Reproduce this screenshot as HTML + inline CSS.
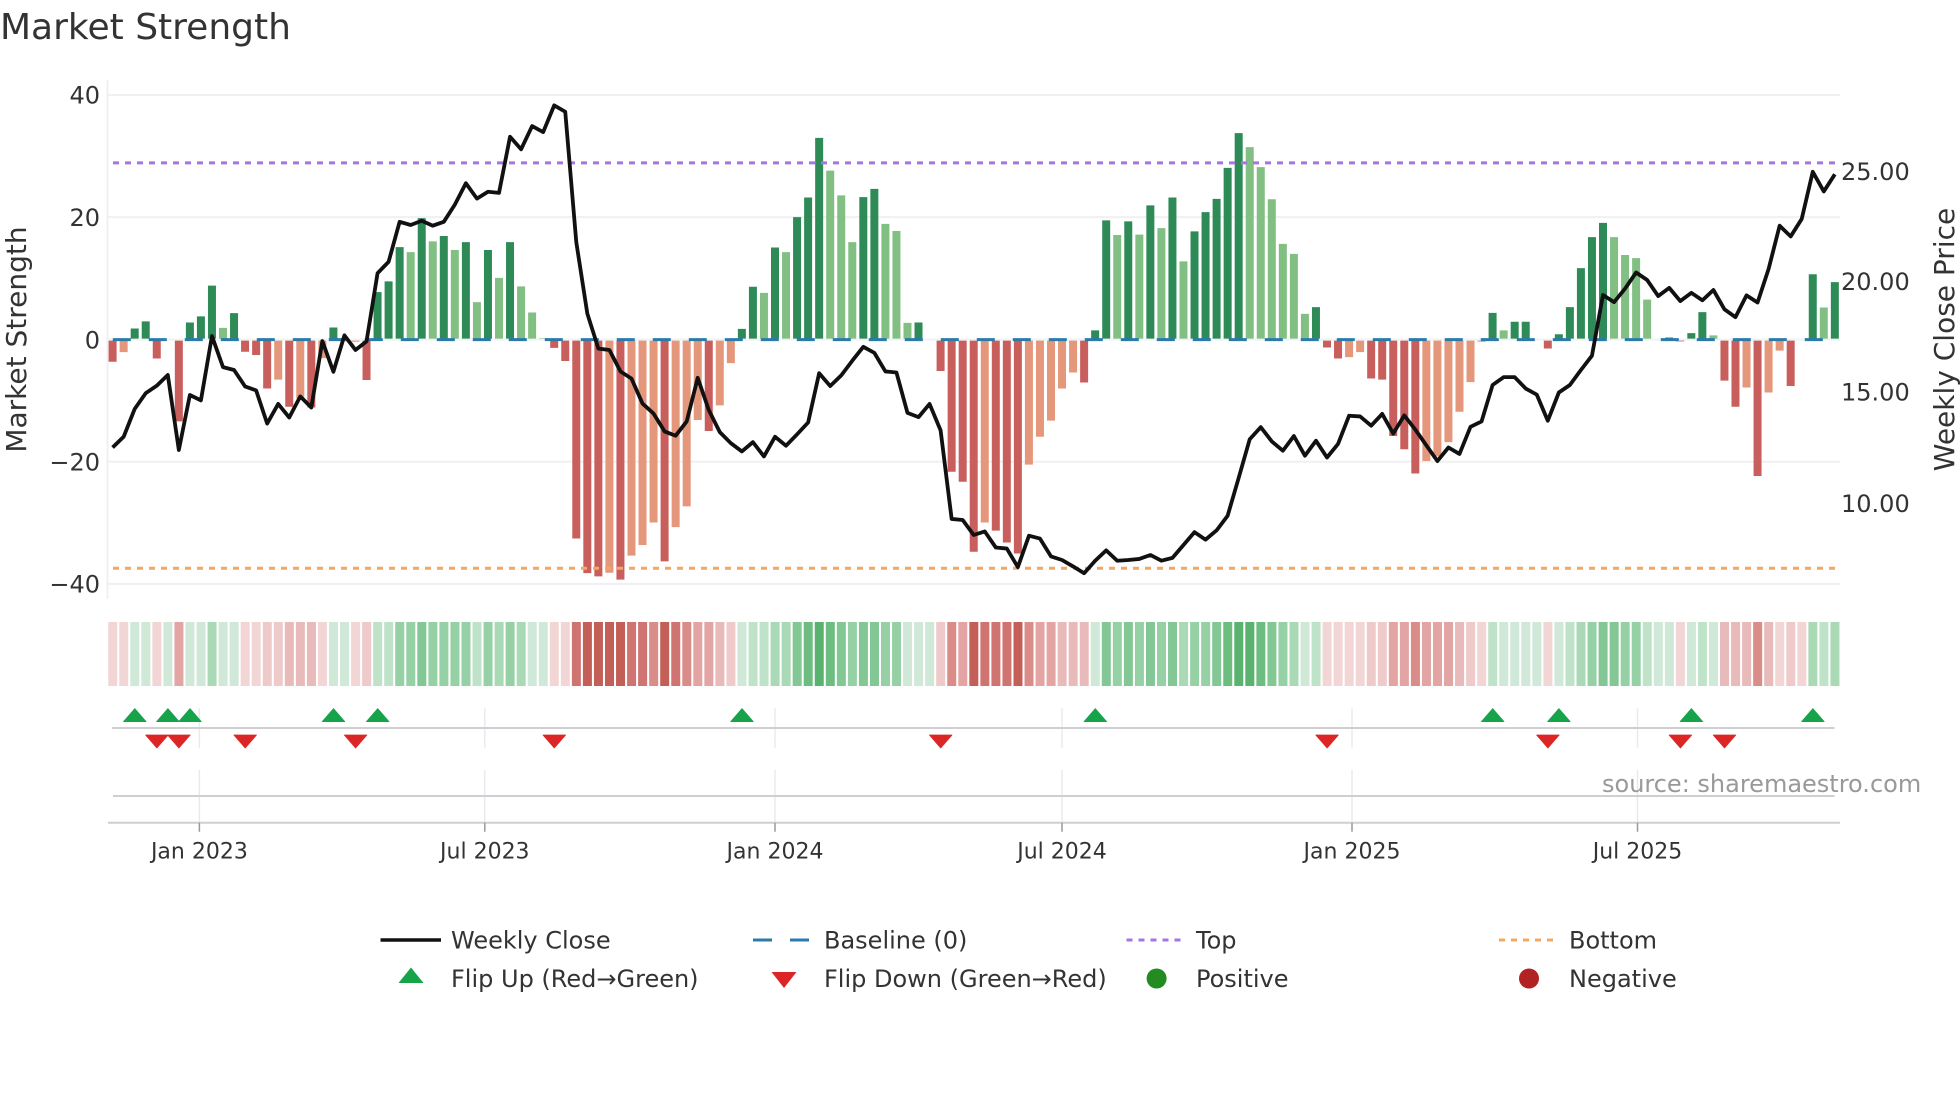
<!DOCTYPE html>
<html lang="en">
<head>
<meta charset="utf-8">
<title>Market Strength</title>
<style>
html,body{margin:0;padding:0;background:#fff}
svg{display:block}
text{font-family:"DejaVu Sans","Liberation Sans",sans-serif;fill:#333}
.n{vector-effect:non-scaling-stroke;fill:none}
</style>
</head>
<body>
<svg xmlns="http://www.w3.org/2000/svg" width="1960" height="1102" viewBox="0 0 1960 1102">
<rect width="1960" height="1102" fill="#fff"/>
<defs>
<polygon id="u" points="-11.3,0 11.3,0 0,-13" fill="#16a34a" stroke="#16a34a" stroke-width=".8" stroke-linejoin="round"/>
<polygon id="d" points="-11.3,0 11.3,0 0,13" fill="#dc2626" stroke="#dc2626" stroke-width=".8" stroke-linejoin="round"/>
</defs>

<text x="0" y="39" font-size="36">Market Strength</text>

<!-- grid -->
<g stroke="#f0f0f2" stroke-width="2">
<line x1="107" y1="95" x2="1840" y2="95"/>
<line x1="107" y1="217.1" x2="1840" y2="217.1"/>
<line x1="107" y1="461.8" x2="1840" y2="461.8"/>
<line x1="107" y1="583.9" x2="1840" y2="583.9"/>
<line x1="107.5" y1="80" x2="107.5" y2="599"/>
</g>

<!-- bars -->
<g transform="translate(112.6,339.6) scale(11.04,.35714)">
<path class="n" stroke="#2e8b57" stroke-width="8" d="M2 0V-31M3 0V-51M7 0V-48M8 0V-65M9 0V-151M11 0V-74M20 0V-34M24 0V-133M25 0V-163M26 0V-259M28 0V-340M30 0V-290M32 0V-273M34 0V-251M36 0V-273M57 0V-30M58 0V-148M60 0V-258M62 0V-343M63 0V-398M64 0V-565M68 0V-399M69 0V-422M73 0V-48M89 0V-26M90 0V-334M92 0V-331M94 0V-376M96 0V-398M98 0V-303M99 0V-357M100 0V-394M101 0V-481M102 0V-578M109 0V-91M125 0V-75M127 0V-50M128 0V-50M131 0V-15M132 0V-91M133 0V-200M134 0V-287M135 0V-327M141 0V-6M143 0V-18M144 0V-77M154 0V-183M156 0V-161"/>
<path class="n" stroke="#82bf82" stroke-width="8" d="M10 0V-33M27 0V-245M29 0V-275M31 0V-251M33 0V-105M35 0V-173M37 0V-149M38 0V-76M39 0V-4M59 0V-131M61 0V-245M65 0V-473M66 0V-404M67 0V-273M70 0V-324M71 0V-304M72 0V-47M91 0V-293M93 0V-294M95 0V-312M97 0V-219M103 0V-539M104 0V-483M105 0V-393M106 0V-268M107 0V-240M108 0V-72M126 0V-26M136 0V-287M137 0V-237M138 0V-228M139 0V-112M145 0V-12M155 0V-90"/>
<path class="n" stroke="#c95f5c" stroke-width="8" d="M0 0V62M4 0V53M6 0V229M12 0V34M13 0V43M14 0V137M16 0V188M18 0V190M23 0V113M40 0V23M41 0V60M42 0V557M43 0V654M44 0V663M46 0V672M50 0V621M54 0V256M75 0V88M76 0V370M77 0V398M78 0V594M80 0V535M81 0V568M82 0V599M88 0V120M110 0V22M111 0V53M114 0V109M115 0V112M116 0V270M117 0V307M118 0V375M130 0V25M142 0V5M146 0V115M147 0V188M149 0V382M152 0V130"/>
<path class="n" stroke="#e5977c" stroke-width="8" d="M1 0V35M15 0V112M17 0V165M19 0V52M22 0V6M45 0V653M47 0V605M48 0V575M49 0V512M51 0V525M52 0V467M53 0V225M55 0V184M56 0V66M79 0V512M83 0V350M84 0V272M85 0V227M86 0V137M87 0V92M112 0V49M113 0V35M119 0V340M120 0V327M121 0V287M122 0V202M123 0V119M124 0V6M148 0V134M150 0V148M151 0V31"/>
</g>

<!-- zero line & baseline -->
<line x1="107" y1="339.6" x2="1840" y2="339.6" stroke="#eef3f3" stroke-width="2"/>
<line x1="112.8" y1="339.6" x2="1835" y2="339.6" stroke="#2b7baa" stroke-width="3" stroke-dasharray="18 18"/>

<!-- top / bottom -->
<line x1="113" y1="162.9" x2="1835" y2="162.9" stroke="#a875e0" stroke-width="3" stroke-dasharray="6 6"/>
<line x1="113" y1="568.2" x2="1835" y2="568.2" stroke="#f4a765" stroke-width="3" stroke-dasharray="6 6"/>

<!-- price line -->
<g transform="translate(112.6,60) scale(11.04,.35714)">
<polyline class="n" stroke="#111" stroke-width="3.8" stroke-linejoin="round" points="0,1085 1,1055 2,977 3,933 4,912 5,882 6,1092 7,938 8,953 9,773 10,860 11,868 12,914 13,925 14,1018 15,963 16,1001 17,942 18,973 19,787 20,873 21,771 22,812 23,788 24,597 25,565 26,453 27,462 28,450 29,464 30,453 31,405 32,345 33,388 34,369 35,372 36,215 37,250 38,185 39,202 40,127 41,145 42,510 43,710 44,808 45,812 46,872 47,892 48,962 49,990 50,1040 51,1052 52,1012 53,890 54,980 55,1042 56,1073 57,1096 58,1070 59,1110 60,1055 61,1080 62,1048 63,1015 64,877 65,913 66,883 67,842 68,803 69,820 70,872 71,875 72,988 73,1000 74,963 75,1037 76,1285 77,1288 78,1330 79,1320 80,1365 81,1368 82,1420 83,1332 84,1340 85,1390 86,1400 87,1418 88,1437 89,1402 90,1373 91,1402 92,1400 93,1397 94,1386 95,1402 96,1394 97,1358 98,1322 99,1343 100,1317 101,1276 102,1170 103,1062 104,1028 105,1068 106,1094 107,1053 108,1108 109,1066 110,1113 111,1075 112,996 113,998 114,1024 115,991 116,1046 117,995 118,1035 119,1079 120,1123 121,1085 122,1103 123,1027 124,1012 125,910 126,888 127,888 128,920 129,937 130,1010 131,931 132,910 133,868 134,828 135,658 136,678 137,640 138,595 139,616 140,661 141,638 142,675 143,652 144,673 145,644 146,698 147,720 148,659 149,679 150,585 151,464 152,494 153,445 154,313 155,368 156,320"/>
</g>

<!-- y labels left -->
<g font-size="24" text-anchor="end">
<text x="100" y="103.7">40</text>
<text x="100" y="225.8">20</text>
<text x="100" y="348.3">0</text>
<text x="100" y="470.5">−20</text>
<text x="100" y="592.6">−40</text>
</g>
<!-- y labels right -->
<g font-size="24">
<text x="1841" y="180.1">25.00</text>
<text x="1841" y="290.1">20.00</text>
<text x="1841" y="400.7">15.00</text>
<text x="1841" y="512">10.00</text>
</g>
<text transform="translate(26,339.5) rotate(-90)" font-size="28" text-anchor="middle">Market Strength</text>
<text transform="translate(1954,339.5) rotate(-90)" font-size="28" text-anchor="middle">Weekly Close Price</text>

<!-- heat strip -->
<g transform="translate(112.7,622) scale(11.04,64)">
<path class="n" stroke-width="9" stroke="#f2d6d6" d="M0 0V1M1 0V1M4 0V1M12 0V1M13 0V1M19 0V1M22 0V1M40 0V1M41 0V1M110 0V1M111 0V1M112 0V1M113 0V1M124 0V1M130 0V1M142 0V1M151 0V1M153 0V1"/>
<path class="n" stroke-width="9" stroke="#eecaca" d="M14 0V1M15 0V1M23 0V1M56 0V1M75 0V1M114 0V1M115 0V1M123 0V1M152 0V1"/>
<path class="n" stroke-width="9" stroke="#e8baba" d="M16 0V1M17 0V1M18 0V1M55 0V1M86 0V1M87 0V1M88 0V1M122 0V1M146 0V1M147 0V1M148 0V1M150 0V1"/>
<path class="n" stroke-width="9" stroke="#e2a5a3" d="M6 0V1M53 0V1M54 0V1M77 0V1M84 0V1M85 0V1M116 0V1M117 0V1M119 0V1M120 0V1M121 0V1"/>
<path class="n" stroke-width="9" stroke="#d98c88" d="M49 0V1M52 0V1M76 0V1M83 0V1M118 0V1M149 0V1"/>
<path class="n" stroke-width="9" stroke="#cf7470" d="M42 0V1M47 0V1M48 0V1M51 0V1M79 0V1M80 0V1M81 0V1"/>
<path class="n" stroke-width="9" stroke="#c45f58" d="M43 0V1M44 0V1M45 0V1M46 0V1M50 0V1M78 0V1M82 0V1"/>
<path class="n" stroke-width="9" stroke="#cfe8d8" d="M2 0V1M3 0V1M5 0V1M7 0V1M8 0V1M10 0V1M11 0V1M20 0V1M21 0V1M38 0V1M39 0V1M57 0V1M72 0V1M73 0V1M74 0V1M89 0V1M108 0V1M126 0V1M127 0V1M128 0V1M129 0V1M131 0V1M140 0V1M141 0V1M143 0V1M145 0V1"/>
<path class="n" stroke-width="9" stroke="#bfe3c9" d="M24 0V1M25 0V1M33 0V1M58 0V1M59 0V1M109 0V1M125 0V1M132 0V1M139 0V1M144 0V1M155 0V1"/>
<path class="n" stroke-width="9" stroke="#aad9b5" d="M9 0V1M35 0V1M37 0V1M60 0V1M61 0V1M97 0V1M107 0V1M133 0V1M154 0V1M156 0V1"/>
<path class="n" stroke-width="9" stroke="#96d0a5" d="M26 0V1M27 0V1M29 0V1M30 0V1M31 0V1M32 0V1M34 0V1M36 0V1M67 0V1M70 0V1M71 0V1M91 0V1M93 0V1M95 0V1M98 0V1M99 0V1M106 0V1M134 0V1M137 0V1M138 0V1"/>
<path class="n" stroke-width="9" stroke="#82c794" d="M28 0V1M62 0V1M66 0V1M68 0V1M69 0V1M90 0V1M92 0V1M94 0V1M96 0V1M100 0V1M105 0V1M135 0V1M136 0V1"/>
<path class="n" stroke-width="9" stroke="#6dbd80" d="M63 0V1M65 0V1M101 0V1M104 0V1"/>
<path class="n" stroke-width="9" stroke="#59b36f" d="M64 0V1M102 0V1M103 0V1"/>
</g>

<!-- vertical grid of lower rows -->
<g stroke="#e8e9ee" stroke-width="1.4">
<path d="M199.4 708.3V747.7M199.4 769.7V822M484.8 708.3V747.7M484.8 769.7V822M775 708.3V747.7M775 769.7V822M1062 708.3V747.7M1062 769.7V822M1352 708.3V747.7M1352 769.7V822M1637.5 708.3V747.7M1637.5 769.7V822"/>
</g>
<g stroke="#cfcfd2" stroke-width="2">
<line x1="112" y1="728" x2="1834.5" y2="728"/>
<line x1="113" y1="796" x2="1834.5" y2="796"/>
<line x1="108" y1="822.7" x2="1840" y2="822.7"/>
</g>
<g stroke="#999" stroke-width="1.5">
<path d="M199.4 822.7V831.7M484.8 822.7V831.7M775 822.7V831.7M1062 822.7V831.7M1352 822.7V831.7M1637.5 822.7V831.7"/>
</g>

<!-- flip markers -->
<g>
<use href="#u" x="134.8" y="721.6"/><use href="#u" x="167.9" y="721.6"/><use href="#u" x="190" y="721.6"/><use href="#u" x="333.5" y="721.6"/><use href="#u" x="377.7" y="721.6"/><use href="#u" x="742" y="721.6"/><use href="#u" x="1095.3" y="721.6"/><use href="#u" x="1492.7" y="721.6"/><use href="#u" x="1558.9" y="721.6"/><use href="#u" x="1691.4" y="721.6"/><use href="#u" x="1812.9" y="721.6"/>
<use href="#d" x="156.9" y="735"/><use href="#d" x="178.9" y="735"/><use href="#d" x="245.2" y="735"/><use href="#d" x="355.6" y="735"/><use href="#d" x="554.3" y="735"/><use href="#d" x="940.7" y="735"/><use href="#d" x="1327.1" y="735"/><use href="#d" x="1547.9" y="735"/><use href="#d" x="1680.4" y="735"/><use href="#d" x="1724.5" y="735"/>
</g>

<text x="1602" y="792" font-size="24" style="fill:#999">source: sharemaestro.com</text>

<!-- x labels -->
<g font-size="22" text-anchor="middle">
<text x="199.4" y="858.7">Jan 2023</text>
<text x="484.8" y="858.7">Jul 2023</text>
<text x="775" y="858.7">Jan 2024</text>
<text x="1062" y="858.7">Jul 2024</text>
<text x="1352" y="858.7">Jan 2025</text>
<text x="1637.5" y="858.7">Jul 2025</text>
</g>

<!-- legend -->
<g font-size="24">
<text x="451" y="948.6">Weekly Close</text>
<text x="824" y="948.6">Baseline (0)</text>
<text x="1196" y="948.6">Top</text>
<text x="1569" y="948.6">Bottom</text>
<text x="451" y="986.8">Flip Up (Red→Green)</text>
<text x="824" y="986.8">Flip Down (Green→Red)</text>
<text x="1196" y="986.8">Positive</text>
<text x="1569" y="986.8">Negative</text>
</g>
<line x1="380.5" y1="940" x2="441" y2="940" stroke="#111" stroke-width="3.5"/>
<path d="M753 940H772M790 940H809" stroke="#2b7baa" stroke-width="3"/>
<line x1="1126.5" y1="940" x2="1182" y2="940" stroke="#a875e0" stroke-width="3" stroke-dasharray="6 6"/>
<line x1="1499" y1="940" x2="1555" y2="940" stroke="#f4a765" stroke-width="3" stroke-dasharray="6 6"/>
<polygon points="398.5,983 423.5,983 411,967.5" fill="#16a34a"/>
<polygon points="771.5,972 796.5,972 784,988" fill="#dc2626"/>
<circle cx="1156.6" cy="978.5" r="10" fill="#228b22"/>
<circle cx="1529" cy="978.5" r="10" fill="#b22222"/>
</svg>
</body>
</html>
